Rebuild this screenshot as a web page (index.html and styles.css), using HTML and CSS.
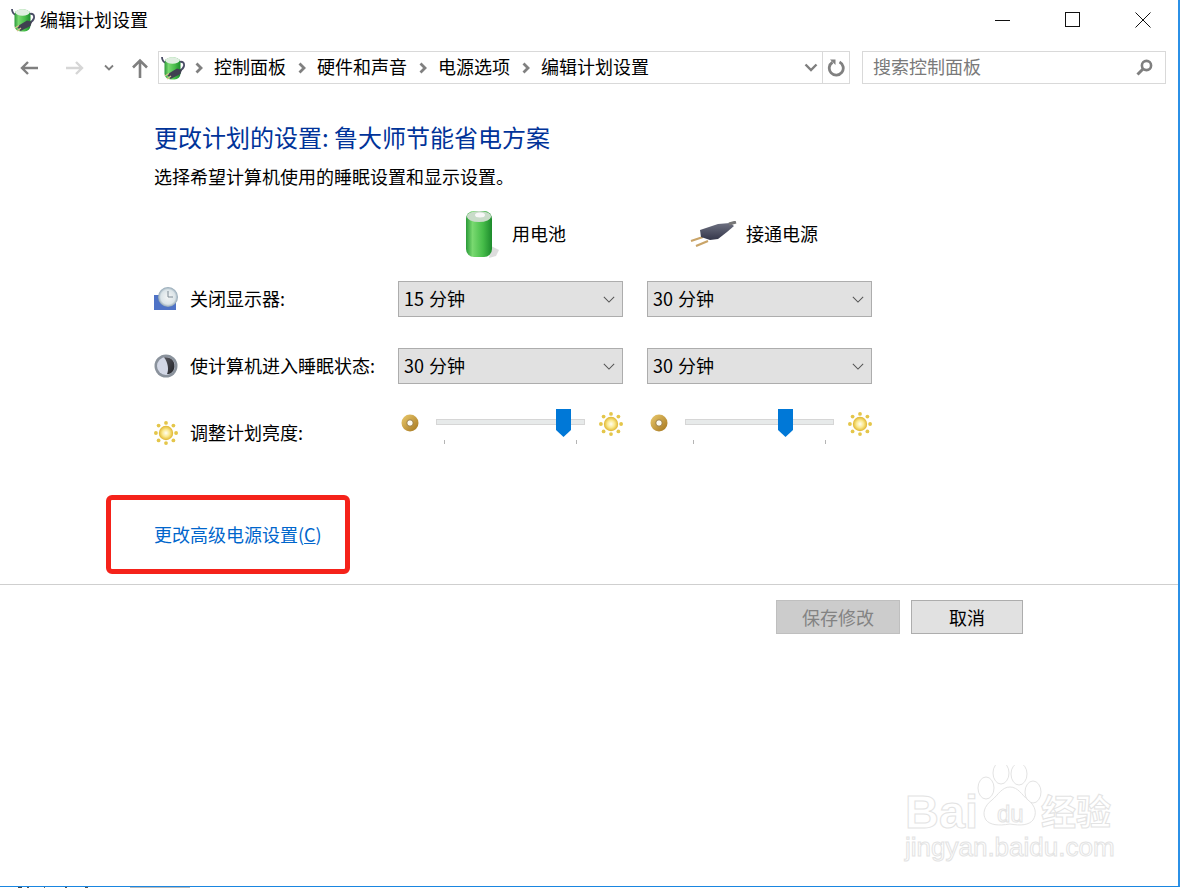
FILE: index.html
```html
<!DOCTYPE html>
<html lang="zh-CN">
<head>
<meta charset="utf-8">
<title>编辑计划设置</title>
<link rel="stylesheet" href="styles.css">
</head>
<body>
<svg class="defs" width="0" height="0" aria-hidden="true">
  <defs>
    <linearGradient id="gGreen" x1="0" x2="1" y1="0" y2="0">
      <stop offset="0" stop-color="#2a9a38"/><stop offset=".25" stop-color="#79d970"/><stop offset=".65" stop-color="#46bd49"/><stop offset="1" stop-color="#1c8a2c"/>
    </linearGradient>
    <linearGradient id="gGold" x1="0" x2="1" y1="0" y2="1">
      <stop offset="0" stop-color="#eccb6e"/><stop offset="1" stop-color="#a3741e"/>
    </linearGradient>
    <radialGradient id="gSun"><stop offset="0" stop-color="#fffef5"/><stop offset=".5" stop-color="#fbe98f"/><stop offset="1" stop-color="#dfb52f"/></radialGradient>
    <linearGradient id="gPlug" x1="0" x2="0" y1="0" y2="1">
      <stop offset="0" stop-color="#6d7080"/><stop offset="1" stop-color="#34364a"/>
    </linearGradient>
    <radialGradient id="gClock"><stop offset="0" stop-color="#f4f6f6"/><stop offset=".72" stop-color="#dbe4e8"/><stop offset="1" stop-color="#8ea3b2"/></radialGradient>
    <linearGradient id="gMoon" x1="0" x2="1" y1="0" y2="1">
      <stop offset="0" stop-color="#55565c"/><stop offset="1" stop-color="#222328"/>
    </linearGradient>
    <symbol id="appIcon" viewBox="0 0 24 24">
      <path d="M1 1c0 3 1 5 4 6M18 6c4-1 5.500 1 5 4-.5 3-3 4-5 5" fill="none" stroke="#4a4d66" stroke-width="1.800"/>
      <rect x="3.500" y="1.500" width="16" height="22" rx="6" fill="url(#gGreen)"/>
      <ellipse cx="11.500" cy="4.500" rx="7" ry="3.200" fill="#dfeee0"/>
      <path d="M6 18.500l10-6 5 1.500-1.500 4-10 5z" fill="#3f4150"/>
      <path d="M4 20l4-2.500M6 23l4-3" stroke="#d6c28c" stroke-width="1.300"/>
    </symbol>
    <symbol id="sunIcon" viewBox="0 0 24 24">
      <g fill="#e4c64a">
        <circle cx="12" cy="1.900" r="1.900"/><circle cx="12" cy="22.100" r="1.900"/><circle cx="1.900" cy="12" r="1.900"/><circle cx="22.100" cy="12" r="1.900"/>
        <circle cx="4.600" cy="4.600" r="1.900"/><circle cx="19.400" cy="4.600" r="1.900"/><circle cx="4.600" cy="19.400" r="1.900"/><circle cx="19.400" cy="19.400" r="1.900"/>
      </g>
      <circle cx="12" cy="12" r="7.200" fill="url(#gSun)"/>
    </symbol>
    <symbol id="ringIcon" viewBox="0 0 18 18">
      <circle cx="9" cy="9" r="8.500" fill="url(#gGold)"/>
      <circle cx="9" cy="9" r="3.200" fill="#fdfbf2" stroke="#8a6a2c" stroke-width=".8"/>
    </symbol>
    <symbol id="chev" viewBox="0 0 8 12">
      <path d="M1.500 1.500L6 6l-4.500 4.500" fill="none" stroke="#808080" stroke-width="2.800"/>
    </symbol>
    <symbol id="dd" viewBox="0 0 14 8">
      <path d="M1 1l6 6 6-6" fill="none" stroke="#555" stroke-width="1.200"/>
    </symbol>
  </defs>
</svg>

<div class="window">
  <header class="titlebar">
    <svg class="title-icon"><use href="#appIcon"/></svg>
    <span class="title-text">编辑计划设置</span>
    <div class="controls">
      <span class="ctl"><svg width="16" height="16" viewBox="0 0 16 16"><path d="M0 8.500h15" stroke="#111" fill="none"/></svg></span>
      <span class="ctl"><svg width="16" height="16" viewBox="0 0 16 16"><rect x=".5" y=".5" width="14" height="14" fill="none" stroke="#111"/></svg></span>
      <span class="ctl"><svg width="16" height="16" viewBox="0 0 16 16"><path d="M.5.500l15 15M15.500.500l-15 15" stroke="#111" fill="none"/></svg></span>
    </div>
  </header>

  <nav class="toolbar">
    <div class="nav-buttons">
      <svg class="nav-back" width="20" height="16" viewBox="0 0 20 16"><path d="M19 8H3M9 2L3 8l6 6" fill="none" stroke="#7f7f7f" stroke-width="2.400"/></svg>
      <svg class="nav-forward" width="20" height="16" viewBox="0 0 20 16"><path d="M1 8h16M11 2l6 6-6 6" fill="none" stroke="#d6d6d6" stroke-width="2.400"/></svg>
      <svg class="nav-drop" width="10" height="7" viewBox="0 0 10 7"><path d="M1 1.500l4 4 4-4" fill="none" stroke="#7f7f7f" stroke-width="1.800"/></svg>
      <svg class="nav-up" width="18" height="20" viewBox="0 0 18 20"><path d="M9 20V3M2 9.500L9 2.500l7 7" fill="none" stroke="#7f7f7f" stroke-width="2.600"/></svg>
    </div>
    <div class="address">
      <svg class="addr-icon"><use href="#appIcon"/></svg>
      <svg class="crumb-chev"><use href="#chev"/></svg><span class="crumb">控制面板</span>
      <svg class="crumb-chev"><use href="#chev"/></svg><span class="crumb">硬件和声音</span>
      <svg class="crumb-chev"><use href="#chev"/></svg><span class="crumb">电源选项</span>
      <svg class="crumb-chev"><use href="#chev"/></svg><span class="crumb">编辑计划设置</span>
      <svg class="addr-drop" width="14" height="9" viewBox="0 0 14 9"><path d="M1.500 1.500L7 7l5.500-5.500" fill="none" stroke="#7f7f7f" stroke-width="2.400"/></svg>
      <span class="addr-refresh">
        <svg width="18" height="18" viewBox="0 0 18 18"><path d="M5.500 3.200A7 7 0 1 0 12.500 2.900" fill="none" stroke="#808080" stroke-width="2.800"/><path d="M3 .5h5.500v5.500z" fill="#808080"/></svg>
      </span>
    </div>
    <div class="search">
      <span class="search-text">搜索控制面板</span>
      <svg width="17" height="17" viewBox="0 0 17 17"><circle cx="10.500" cy="6.500" r="4.600" fill="none" stroke="#7f7f7f" stroke-width="2.600"/><path d="M7 10l-5.500 5.500" stroke="#7f7f7f" stroke-width="3"/></svg>
    </div>
  </nav>

  <main class="content">
    <h1 class="heading">更改计划的设置: 鲁大师节能省电方案</h1>
    <p class="intro">选择希望计算机使用的睡眠设置和显示设置。</p>

    <div class="settings">
      <div class="col-head head-battery">
        <svg class="battery" width="36" height="48" viewBox="0 0 36 48">
          <path d="M26 36l8 4-3 6-7 2z" fill="#cfcfcf" opacity=".7"/>
          <rect x="1" y="1" width="26" height="46" rx="8" fill="url(#gGreen)"/>
          <ellipse cx="14" cy="6.500" rx="12" ry="5.500" fill="#c9dcc9"/>
          <ellipse cx="15" cy="5" rx="5" ry="2.500" fill="#f7f7f7"/>
        </svg>
        <span class="txt">用电池</span>
      </div>
      <div class="col-head head-plug">
        <svg class="plug" width="48" height="26" viewBox="0 0 48 26">
          <path d="M1 20l12-4M6 25l12-5" stroke="#c9a468" stroke-width="2.200" fill="none"/>
          <path d="M10 9l18-6 12-1 4 3-7 6-9 7-8 1-9-3z" fill="url(#gPlug)"/>
          <path d="M39 3l7-2" stroke="#777" stroke-width="3"/>
        </svg>
        <span class="txt">接通电源</span>
      </div>

      <div class="label">
        <svg class="row-icon" width="24" height="24" viewBox="0 0 24 24">
          <rect x="0" y="8" width="22" height="15" fill="#4f73c6"/>
          <circle cx="14" cy="10" r="10" fill="url(#gClock)"/>
          <path d="M14 4v6h5" fill="none" stroke="#7d8a94" stroke-width="1"/>
        </svg>
        <span class="txt">关闭显示器:</span>
      </div>
      <div class="select"><span class="txt">15 分钟</span><svg width="12" height="7"><use href="#dd"/></svg></div>
      <div class="select"><span class="txt">30 分钟</span><svg width="12" height="7"><use href="#dd"/></svg></div>

      <div class="label">
        <svg class="row-icon" width="24" height="24" viewBox="0 0 24 24">
          <circle cx="12" cy="12" r="11.500" fill="#8a929c"/>
          <circle cx="12" cy="12" r="9" fill="#d3d8e6"/>
          <path d="M10 3.500c6-1 11 3 10.500 9-.4 5-4 8-7.500 7.500 2-4 1-12-3-16.500z" fill="url(#gMoon)"/>
        </svg>
        <span class="txt">使计算机进入睡眠状态:</span>
      </div>
      <div class="select"><span class="txt">30 分钟</span><svg width="12" height="7"><use href="#dd"/></svg></div>
      <div class="select"><span class="txt">30 分钟</span><svg width="12" height="7"><use href="#dd"/></svg></div>

      <div class="label">
        <svg class="row-icon" width="24" height="24"><use href="#sunIcon"/></svg>
        <span class="txt">调整计划亮度:</span>
      </div>
      <div class="bright">
        <svg class="ring" width="18" height="18"><use href="#ringIcon"/></svg>
        <div class="slider">
          <i class="thumb" style="left:119px"></i>
          <i class="tick tick-a"></i><i class="tick tick-b"></i>
        </div>
        <svg class="sun" width="24" height="24"><use href="#sunIcon"/></svg>
      </div>
      <div class="bright">
        <svg class="ring" width="18" height="18"><use href="#ringIcon"/></svg>
        <div class="slider">
          <i class="thumb" style="left:92px"></i>
          <i class="tick tick-a"></i><i class="tick tick-b"></i>
        </div>
        <svg class="sun" width="24" height="24"><use href="#sunIcon"/></svg>
      </div>
    </div>

    <p class="advanced"><a class="link">更改高级电源设置(<u>C</u>)</a></p>
  </main>

  <hr class="sep">

  <footer class="actions">
    <button class="btn btn-disabled" type="button"><span class="txt">保存修改</span></button>
    <button class="btn" type="button"><span class="txt">取消</span></button>
  </footer>

  <div class="highlight"></div>

  <svg class="watermark" width="225" height="105" viewBox="0 0 225 105">
    <g fill="#fff" stroke="#e3e3e3" stroke-width="1">
      <text class="wm-bai" x="5" y="63">Bai</text>
      <ellipse cx="86" cy="23" rx="8" ry="11"/><ellipse cx="101" cy="8" rx="8" ry="11"/><ellipse cx="119" cy="9" rx="8" ry="11"/><ellipse cx="133" cy="27" rx="8" ry="11"/>
      <path d="M110 22c8 0 12 8 18 13 8 6 9 14 5 20-4 5-12 6-23 4-12 2-20 1-24-4-4-6-2-14 6-20 6-5 10-13 18-13z"/>
      <text class="wm-du" x="97" y="57">du</text>
      <text class="wm-cn" x="141" y="60">经验</text>
      <text class="wm-url" x="5" y="91">jingyan.baidu.com</text>
    </g>
  </svg>
</div>
<div class="under-strip"></div>
</body>
</html>
```
FILE: styles.css
```css
* { box-sizing: border-box; }
html, body { margin: 0; padding: 0; background: #fff; }
body { width: 1180px; height: 888px; overflow: hidden; font-family: "Noto Sans CJK SC", "Noto Sans", sans-serif; font-size: 18px; color: #000; }
.defs { position: absolute; }

.window { position: relative; width: 1180px; height: 887px; border-right: 2px solid #2b90e6; border-bottom: 1px solid #1a86e0; }
.under-strip { height: 1px; background: linear-gradient(90deg, #fff 18px, #444 18px, #444 22px, #fff 22px, #fff 27px, #555 27px, #555 29px, #fff 29px, #fff 44px, #666 44px, #666 45px, #fff 45px, #fff 65px, #555 65px, #555 67px, #fff 67px, #fff 85px, #555 85px, #555 88px, #fff 88px, #fff 130px, #bbb 130px, #bbb 190px, #fff 190px); }

.txt, .crumb, .title-text, .search-text { padding-bottom: 2px; }

/* title bar */
.titlebar { display: flex; align-items: center; height: 40px; padding-left: 11px; }
.title-icon { width: 24px; height: 24px; margin-right: 5px; }
.title-text { line-height: 36px; }
.controls { margin-left: auto; display: flex; }
.ctl { width: 70px; height: 40px; display: flex; align-items: center; justify-content: center; }

/* toolbar */
.toolbar { display: flex; align-items: center; height: 33px; margin-top: 11px; padding-left: 19px; }
.nav-buttons { display: flex; align-items: center; width: 139px; }
.nav-forward { margin-left: 26px; }
.nav-drop { margin-left: 19px; }
.nav-up { margin-left: 17px; }
.address { display: flex; align-items: center; width: 692px; height: 33px; border: 1px solid #d9d9d9; padding-left: 2px; line-height: 27px; }
.addr-icon { width: 24px; height: 26px; margin-right: 10px; }
.crumb-chev { width: 8px; height: 12px; margin-right: 11px; }
.crumb + .crumb-chev { margin-left: 12px; }
.addr-drop { margin-left: auto; margin-right: 4px; }
.addr-refresh { width: 27px; height: 31px; border-left: 1px solid #d9d9d9; display: flex; align-items: center; justify-content: center; }
.search { display: flex; align-items: center; justify-content: space-between; width: 304px; height: 33px; margin-left: 12px; border: 1px solid #d9d9d9; padding: 0 12px 0 10px; }
.search-text { color: #7a7a7a; line-height: 27px; }

/* content */
.content { padding: 36px 0 0 154px; }
.heading { margin: 0; font-size: 24px; font-weight: 400; line-height: 34px; color: #003399; }
.intro { margin: 9px 0 0; line-height: 26px; }

.settings { display: grid; grid-template-columns: 220px 225px 225px; column-gap: 24px; row-gap: 31px; margin-top: 21px; }
.col-head { display: flex; align-items: center; height: 48px; margin-bottom: -8px; }
.head-battery { grid-column: 2; padding-left: 67px; }
.head-battery .txt { margin-left: 11px; }
.head-plug { padding-left: 43px; }
.head-plug .txt { margin-left: 8px; }

.label { display: flex; align-items: center; height: 36px; grid-column: 1; white-space: nowrap; }
.row-icon { margin-right: 12px; flex: none; }
.select { display: flex; align-items: center; justify-content: space-between; height: 36px; padding: 0 7px 0 5px; background: #e1e1e1; border: 1px solid #adadad; word-spacing: 1px; }

.bright { display: flex; align-items: flex-start; height: 36px; margin-top: -6px; }
.ring { margin: 5px 0 0 3px; flex: none; }
.slider { position: relative; width: 149px; height: 6px; margin: 10px 0 0 17px; background: #e7eaea; border: 1px solid #d6d6d6; flex: none; }
.sun { margin: 3px 0 0 14px; flex: none; }
.thumb { position: absolute; top: -11px; width: 15px; height: 28px; background: #0078d7; clip-path: polygon(0 0, 100% 0, 100% 75%, 50% 100%, 0 75%); }
.tick { position: absolute; top: 20px; width: 1px; height: 4px; background: #b5b5b5; }
.tick-a { left: 7px; }
.tick-b { left: 139px; }

.advanced { margin: 70px 0 0; line-height: 26px; }
.link { color: #0066cc; }
.link u { text-underline-offset: 1px; }

.sep { height: 1px; margin: 37px 0 0; border: 0; background: #cfcfcf; }

.actions { display: flex; justify-content: flex-end; gap: 11px; padding: 15px 155px 0 0; }
.btn { width: 112px; height: 34px; padding: 0; font: inherit; background: #e1e1e1; border: 1px solid #adadad; color: #000; }
.btn-disabled { width: 124px; background: #cccccc; border-color: #bfbfbf; color: #838383; }

/* annotation drawn over the screenshot */
.highlight { position: absolute; left: 106px; top: 495px; width: 244px; height: 79px; border: 5px solid #f5221a; border-radius: 6px; }

.watermark { position: absolute; left: 900px; top: 765px; }
.wm-bai { font-family: "Liberation Sans", sans-serif; font-weight: 700; font-size: 47px; }
.wm-du { font-family: "Liberation Sans", sans-serif; font-size: 24px; }
.wm-cn { font-family: "Noto Sans CJK SC", sans-serif; font-weight: 700; font-size: 35px; }
.wm-url { font-family: "Liberation Sans", sans-serif; font-size: 26px; }
```
